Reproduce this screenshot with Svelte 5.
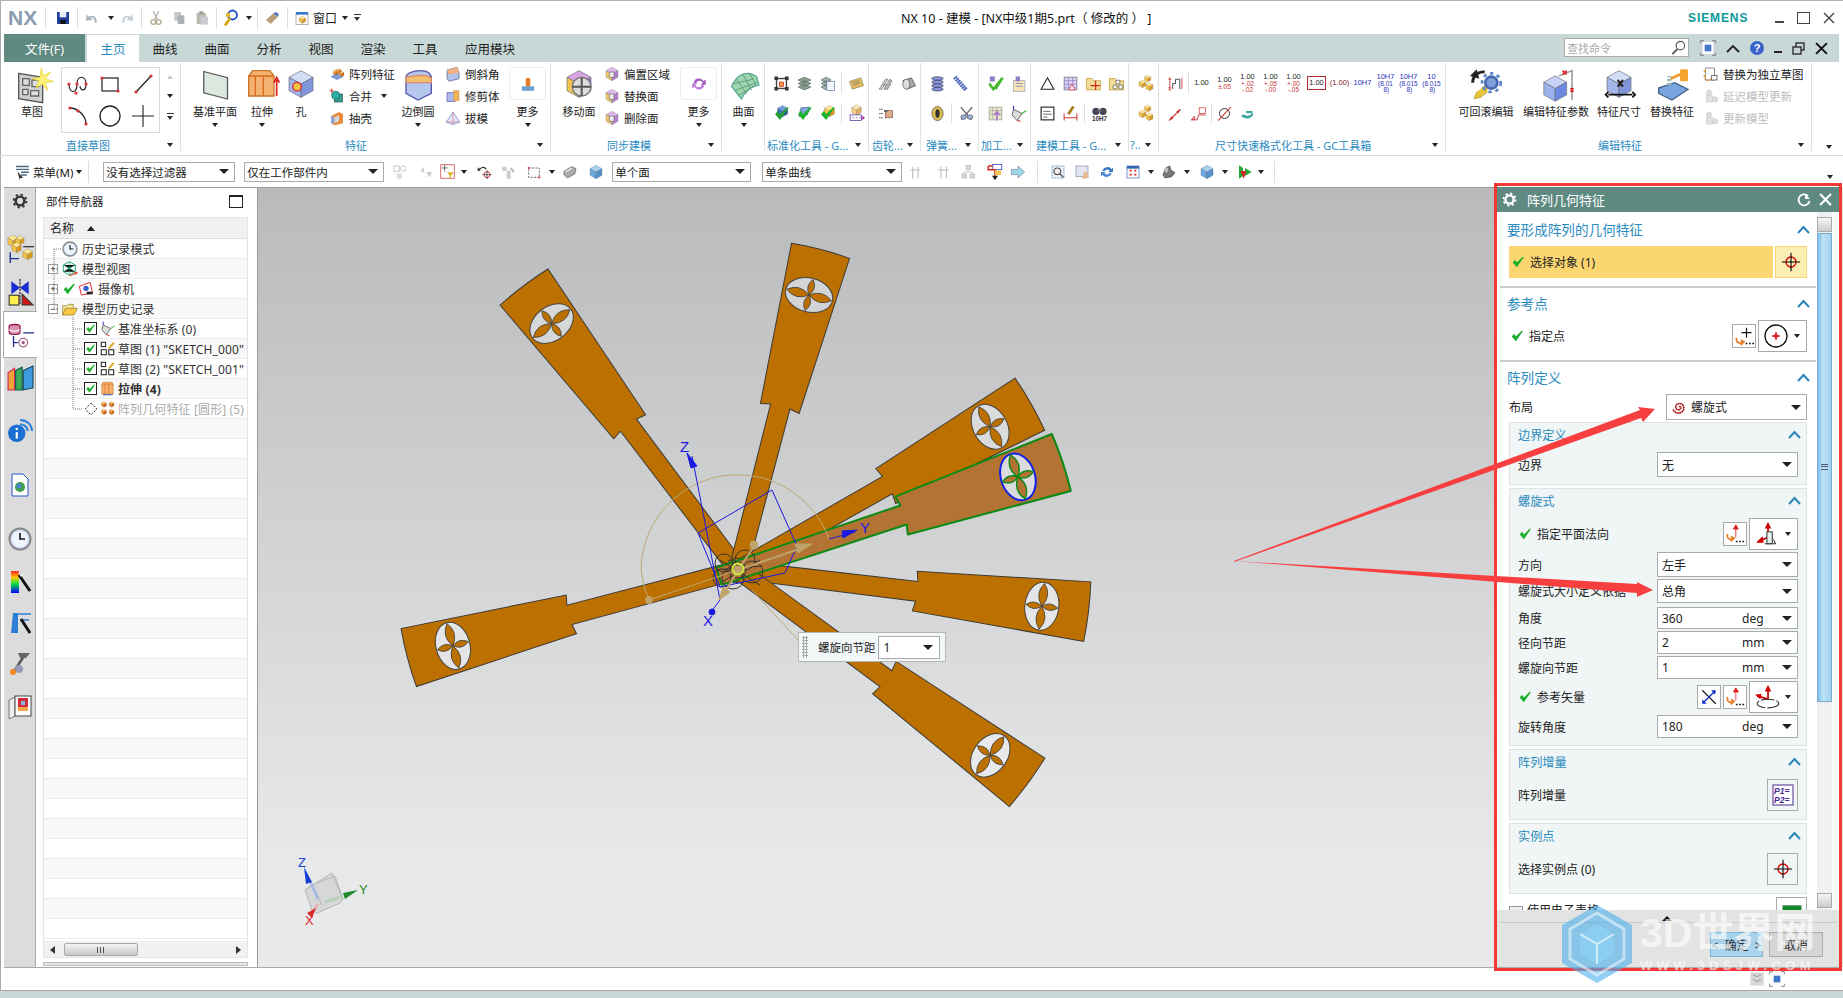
<script>
const cube=(a,b,c,x=0,y=0,s=1)=>`<g transform="translate(${x} ${y}) scale(${s})"><path d="M12 2 21 7 12 12 3 7Z" fill="${a}" stroke="#667" stroke-width=".5"/><path d="M3 7 12 12V22L3 17Z" fill="${b}" stroke="#667" stroke-width=".5"/><path d="M21 7 12 12V22L21 17Z" fill="${c}" stroke="#667" stroke-width=".5"/></g>`;
const bc=cube('#d3def7','#a3b6ea','#7f96da'),yc=(x,y,s)=>cube('#ffe58a','#f4c343','#d99a1e',x,y,s),oc=(x,y,s)=>cube('#ffb55e','#f08a20','#c9620f',x,y,s);
const dot=(x,y,r=1.6)=>`<circle cx="${x}" cy="${y}" r="${r}" fill="#d8333a"/>`;
const chk=`<path d="M3 13 7 8 10 13 20 3 22 4 10 21Z" fill="#18b02c"/>`;
const gear=(c='#444')=>`<circle cx="12" cy="12" r="6.5" fill="none" stroke="${c}" stroke-width="3.6"/><circle cx="12" cy="12" r="9.6" fill="none" stroke="${c}" stroke-width="3" stroke-dasharray="3.5 4"/>`;
const tgt=`<circle cx="12" cy="12" r="6" fill="none" stroke="#d00" stroke-width="1.6"/><path d="M12 1V23M1 12H23" stroke="#000" stroke-width="1.3"/>`;
const clock=`<circle cx="12" cy="12" r="10.5" fill="#cfdef2" stroke="#888" stroke-width="2"/><circle cx="12" cy="12" r="8" fill="#eef4fb"/><path d="M12 6V12H17" stroke="#111" stroke-width="1.6" fill="none"/>`;
const I={
 save:`<rect x="3" y="3" width="18" height="18" fill="#1d3f96"/><rect x="7" y="3" width="10" height="8" fill="#e4ecf8"/><rect x="8" y="15" width="8" height="6" fill="#111"/>`,
 undo:`<path d="M19 19C20 10 13 6 7 10L4 6 3 16 13 15 10 12C13 10 16 12 16 19Z" fill="#aab4bd"/>`,
 redo:`<path d="M5 19C4 10 11 6 17 10L20 6 21 16 11 15 14 12C11 10 8 12 8 19Z" fill="#c5ced4"/>`,
 cut:`<path d="M16 2 10 14M8 2 14 14" stroke="#b3b6b0" stroke-width="2"/><circle cx="8" cy="18" r="3.5" fill="none" stroke="#b3a98e" stroke-width="2"/><circle cx="16" cy="18" r="3.5" fill="none" stroke="#b3a98e" stroke-width="2"/>`,
 copy:`<rect x="5" y="3" width="10" height="13" fill="#c4c7cc"/><rect x="10" y="8" width="10" height="13" fill="#aeb2b8"/>`,
 paste:`<rect x="4" y="4" width="14" height="17" rx="1" fill="#bdb9ab"/><rect x="8" y="2" width="6" height="4" fill="#999"/><rect x="10" y="10" width="11" height="12" fill="#c9cdd2"/>`,
 key:`<circle cx="14" cy="8" r="6" fill="none" stroke="#2352c8" stroke-width="2.5"/><path d="M4 22 11 12" stroke="#d9a514" stroke-width="3.5"/><path d="M5 17 8 20" stroke="#d9a514" stroke-width="2"/><circle cx="8" cy="8" r="3" fill="#e3b52a"/>`,
 eraser:`<path d="M3 15 14 5 21 10 10 21Z" fill="#b9a07b"/><path d="M14 5 21 10 22 6 18 3Z" fill="#4a72c8"/>`,
 win:`<rect x="3" y="5" width="18" height="17" fill="#fff" stroke="#8a8a8a"/><rect x="3" y="3" width="18" height="4" fill="#3a78c9"/>${yc(6,8,.55)}`,
 menu:`<path d="M3 5H21M3 9H21M10 13H21M10 17H18" stroke="#4b6b80" stroke-width="2"/><path d="M5 12 13 21 9 21 8 24Z" fill="#333"/>`,
 sketch:`<path d="M2 4 20 7V26L2 23Z" fill="#ccd0d2" stroke="#555"/><path d="M5 8H10V13H5ZM12 9H17V14H12ZM5 16H9V20H5ZM11 17H17V21H11Z" fill="#ddd" stroke="#666"/><path d="M19 0 20.5 6 26 3 22 8 28 10 22 11 24 17 19.5 12 15 15 17 9.5 12 8 18 7Z" fill="#fff27a" stroke="#e5cc20" stroke-width=".5"/>`,
 spline:`<path d="M3 12C3 22 11 22 11 12 11 3 20 3 20 12 20 20 14 19 14 14" fill="none" stroke="#222" stroke-width="1.2"/>${dot(3,12)}${dot(10,21)}${dot(11,12)}${dot(20,12)}`,
 rect:`<rect x="4" y="6" width="16" height="13" fill="none" stroke="#222" stroke-width="1.2"/>${dot(4,6)}${dot(20,19)}`,
 line:`<path d="M5 20 20 4" stroke="#222" stroke-width="1.2"/>${dot(5,20)}${dot(20,4)}`,
 arc:`<path d="M4 4C12 4 20 12 20 20" fill="none" stroke="#222" stroke-width="1.3"/>${dot(4,4)}${dot(12,7)}${dot(20,20)}`,
 circle:`<circle cx="12" cy="12" r="10" fill="none" stroke="#222" stroke-width="1.3"/>`,
 plus:`<path d="M12 1V23M1 12H23" stroke="#222" stroke-width="1.1"/>`,
 plane:`<path d="M3 2 22 7V24L3 19Z" fill="#dbe7df" stroke="#555" stroke-width="1"/>`,
 extrude:`<path d="M2 6 5 2H18L21 6V21H2Z" fill="#f3b271" stroke="#c9762a"/><path d="M7 6V21M13 6V21M2 6H21" stroke="#d86a1c"/><path d="M23 21V9M21 11 23 7 25 11" stroke="#d22" stroke-width="1.3" fill="none"/>`,
 hole:`${bc}<circle cx="9" cy="14" r="3.2" fill="#f2c63a" stroke="#d24"/>`,
 pattern:`<path d="M2 16 12 10 22 16 12 21Z" fill="#7e9bd6"/>${oc(5,5,.4)}${oc(10,3,.4)}${oc(14,7,.4)}`,
 unite:`<rect x="8" y="9" width="12" height="12" fill="#3a9d92" stroke="#155"/><circle cx="10" cy="11" r="6" fill="#2bb3a3" stroke="#155"/><path d="M4 1V7M1 4H7" stroke="#d22" stroke-width="1.3"/>`,
 shell:`<path d="M3 9 15 3 21 6V20L9 23 3 20Z" fill="#e78b3a"/><path d="M8 11 15 8V17L8 20Z" fill="#d8d8d8"/><path d="M3 9 8 11V20L3 20Z" fill="#8aa4da"/>`,
 blend:`<path d="M3 7C3 4 8 2 14 2 20 2 22 5 22 8V19L12 24 3 19Z" fill="#b6c7ee" stroke="#55a"/><path d="M3 7C8 6 20 4 22 8L22 11 3 11Z" fill="#f0c070" stroke="#d86"/>`,
 chamfer:`<path d="M3 6 18 2 21 10V19L6 23 3 19Z" fill="#b0c2ee" stroke="#557"/><path d="M3 6 18 2 21 10 6 13Z" fill="#f3b081"/>`,
 trim:`<rect x="3" y="7" width="12" height="13" fill="#a9bbee" stroke="#55a"/><rect x="13" y="4" width="8" height="15" fill="#f0b45e" stroke="#c73" stroke-dasharray="2 1"/>`,
 draft:`<path d="M12 3 22 18 12 22 2 18Z" fill="#dfe5f6" stroke="#6480cc"/><path d="M12 3V22M2 18 22 18" stroke="#d55" stroke-width=".8"/>`,
 more:`<rect x="4" y="15" width="16" height="6" fill="#6f9cd2"/><rect x="9" y="4" width="6" height="11" rx="2" fill="#e8782a"/>`,
 move:`${cube('#d9a6e4','#f3c451','#a66dc5')}<circle cx="14" cy="14" r="7" fill="#ddd" stroke="#777"/><path d="M14 7V21M7 14H21" stroke="#555" stroke-width="1.5"/>`,
 offs:`${cube('#e2b8ec','#f6c865','#b680d0')}<path d="M8 9H15V17H8Z" fill="#eee" stroke="#666"/>`,
 refresh:`<path d="M5 11A7 7 0 0 1 18 8L21 6V13H14L17 10A5 5 0 0 0 8 11Z" fill="#a65cc7"/><path d="M19 13A7 7 0 0 1 6 16L3 18V11H10L7 14A5 5 0 0 0 16 13Z" fill="#c27ddc"/>`,
 surf:`<path d="M2 14C6 4 14 1 22 6L24 13C17 14 12 19 10 24Z" fill="#9fd6ad" stroke="#5a9"/><path d="M6 8 14 20M11 4 18 17M16 3 22 13M3 12 20 8M5 17 22 11M8 21 21 13" stroke="#5f9e83" stroke-width=".8"/>`,
 t1:`<rect x="5" y="5" width="14" height="14" fill="none" stroke="#444" stroke-width="2"/><rect x="9" y="10" width="6" height="6" fill="#f2a13a" stroke="#c22"/><path d="M2 2H7V7H2ZM17 2H22V7H17ZM2 17H7V22H2ZM17 17H22V22H17Z" fill="#333"/>`,
 t2:`<path d="M3 7 12 3 21 7 12 11ZM3 12 12 8 21 12 12 16ZM3 17 12 13 21 17 12 21Z" fill="#8aa08a" stroke="#566"/>`,
 t3:`<path d="M3 7 10 3 17 7 10 11ZM3 12 10 8 17 12 10 16ZM3 17 10 13 17 17 10 21Z" fill="#9fb5a7" stroke="#566"/><rect x="11" y="9" width="11" height="13" fill="#f3f7fa" stroke="#67a"/>`,
 t4:`<path d="M2 9 18 4 22 15 6 20Z" fill="#e8b95a" stroke="#886"/><path d="M6 11 16 8M7 14 17 11" stroke="#577" stroke-width="1"/>`,
 t5:`${cube('#6f9ce0','#3c6fc6','#2a55a5',4,-1,.8)}${chk.replace('#18b02c','#22a030')}`,
 t6:`<path d="M7 4 19 3 16 14 4 16Z" fill="#7da8d8" stroke="#468"/>${chk}`,
 t7:`${yc(5,-1,.8)}${chk}`,
 t8:`${cube('#ffe7b2','#f7cc7a','#e0aa5a',3,-2,.75)}<rect x="3" y="14" width="16" height="8" fill="#fff" stroke="#4a2b91"/><path d="M6 18H8M11 18H13M16 18H18" stroke="#4a2b91"/><path d="M20 15 24 18 20 21Z" fill="#b027a3"/>`,
 g1:`<path d="M3 20 12 6H15L7 20ZM8 14H20" stroke="#777" fill="#ddd" stroke-width="1.2"/><path d="M10 20 18 6 21 8 15 20Z" fill="#bbb" stroke="#666"/>`,
 g2:`<path d="M4 8 16 4 22 15 10 20Z" fill="#aaa" stroke="#444"/><ellipse cx="9" cy="13" rx="5" ry="7" fill="#ddd" stroke="#555"/>`,
 g3:`<path d="M3 6H9M3 12H9M3 18H9" stroke="#444" stroke-width="1.4" stroke-dasharray="2 1"/><rect x="12" y="8" width="10" height="10" fill="#d9b08a" stroke="#855"/><rect x="10" y="7" width="5" height="3" fill="#666"/>`,
 s1:`<ellipse cx="12" cy="5" rx="8" ry="2.5" fill="#8a96e0" stroke="#335"/><ellipse cx="12" cy="10" rx="8" ry="2.5" fill="#8a96e0" stroke="#335"/><ellipse cx="12" cy="15" rx="8" ry="2.5" fill="#8a96e0" stroke="#335"/><ellipse cx="12" cy="20" rx="8" ry="2.5" fill="#8a96e0" stroke="#335"/>`,
 s2:`<path d="M4 3 20 21" stroke="#3b59b8" stroke-width="6" stroke-dasharray="2.5 1"/><path d="M4 3 20 21" stroke="#9ab" stroke-width="1"/>`,
 s3:`<ellipse cx="12" cy="12" rx="8" ry="10" fill="#d9bb52" stroke="#555"/><ellipse cx="12" cy="12" rx="3" ry="6" fill="#333"/>`,
 s4:`<path d="M4 3 19 21M20 3 5 21" stroke="#667" stroke-width="2"/><ellipse cx="8" cy="17" rx="4" ry="3" fill="#9ab3e0" stroke="#555"/><ellipse cx="17" cy="17" rx="4" ry="3" fill="#9ab3e0" stroke="#555"/>`,
 m1:`<path d="M3 12 9 20 22 4 12 20" fill="none" stroke="#44b82c" stroke-width="3.5"/><rect x="4" y="2" width="7" height="7" fill="#8f7bc8"/>`,
 m2:`<rect x="5" y="8" width="16" height="15" fill="#f6e6b8" stroke="#99a"/><path d="M8 12H18M8 16H18" stroke="#77a"/><rect x="8" y="2" width="6" height="7" fill="#8f7bc8"/>`,
 m3:`<rect x="3" y="3" width="18" height="18" fill="#e8e4c6" stroke="#999"/><path d="M3 8H21M3 13H21M8 3V21M14 3V21" stroke="#aaa"/><path d="M14 8V22M10 14 14 10 18 14" stroke="#a86bd0" stroke-width="2" fill="none"/>`,
 csys:`<path d="M5 6 17 12 10 22 3 14Z" fill="#ddd" stroke="#333"/><path d="M5 6V1" stroke="#22c" stroke-width="1.5"/><path d="M17 12 23 8" stroke="#2a2" stroke-width="1.5"/><path d="M10 22 15 23" stroke="#d22" stroke-width="1.5"/>`,
 tri:`<path d="M12 4 21 20H3Z" fill="none" stroke="#222" stroke-width="1.5"/>`,
 tbl:`<rect x="3" y="3" width="18" height="18" fill="#dcd6f2" stroke="#667"/><path d="M3 8H21M3 13H21M3 18H21M9 3V21M15 3V21" stroke="#8a79c8"/><path d="M14 13 18 21H10Z" fill="#fff" stroke="#d22"/>`,
 fold:`<path d="M2 5H10L12 8H22V21H2Z" fill="#f1dc9a" stroke="#b9982f"/><path d="M15 8V21M8 15H21" stroke="#c22" stroke-width="1.6"/>`,
 fold2:`<path d="M2 5H10L12 8H22V21H2Z" fill="#f1dc9a" stroke="#b9982f"/><circle cx="14" cy="10" r="3" fill="#fff" stroke="#444"/><circle cx="10" cy="17" r="3" fill="#fff" stroke="#444"/><circle cx="18" cy="17" r="3" fill="#fff" stroke="#444"/>`,
 note:`<rect x="3" y="3" width="18" height="18" fill="#fff" stroke="#222" stroke-width="1.6"/><path d="M6 9H16M6 13H18M6 17H12" stroke="#333"/>`,
 dimb:`<path d="M3 12V22M21 12V22M3 18H21" stroke="#c22" stroke-width="1.3"/><path d="M9 13 16 2" stroke="#a87a20" stroke-width="4"/>`,
 bino:`<circle cx="7" cy="9" r="5" fill="#445"/><circle cx="17" cy="9" r="5" fill="#445"/><rect x="9" y="6" width="6" height="4" fill="#667"/><text x="12" y="23" font-size="9" text-anchor="middle" font-family="Liberation Sans" font-weight="700" fill="#333">10H7</text>`,
 yel:`${yc(9,-1,.5)}${yc(1,6,.55)}${yc(11,10,.55)}`,
 d1:`<path d="M2 6H6M4 3V21M2 21H6M2 18H6" stroke="#c33" stroke-width="1.2"/><path d="M8 20V12H12V6H18V20" fill="none" stroke="#333" stroke-width="1.2"/><path d="M21 4V20" stroke="#c33" stroke-width="1.2"/>`,
 d2:`<path d="M3 22 19 6" stroke="#c33" stroke-width="1.6"/><path d="M3 22 6 16 9 19ZM19 6 13 9 16 12Z" fill="#c33"/>`,
 d3:`<path d="M2 21H10L12 14H22M2 21 6 16 7 20Z" stroke="#c33" stroke-width="1.3" fill="none"/><rect x="13" y="4" width="9" height="8" fill="none" stroke="#c33"/>`,
 d4:`<circle cx="12" cy="12" r="7" fill="none" stroke="#333" stroke-width="1.4"/><path d="M3 22 21 3" stroke="#c33" stroke-width="1.5"/>`,
 d5:`<path d="M6 13C10 16 15 16 19 11V7L20 14C15 21 8 20 3 16Z" fill="#3fa9a0"/><path d="M10 10H19" stroke="#3fa9a0" stroke-width="3"/>`,
 rb:`<path d="M2 11A8 8 0 0 1 11 3" stroke="#222" fill="none" stroke-width="2.2"/><path d="M0 6 5 1 7 8Z" fill="#222"/><path d="M3 23 5 18 12 16 13 18 8 22Z" fill="#e8c53a" stroke="#a8891a" stroke-width=".5"/><path d="M6 20 15 12" stroke="#e8c53a" stroke-width="4"/><circle cx="16" cy="11" r="4.5" fill="#7da0d8" stroke="#4467b0" stroke-width="2"/><circle cx="16" cy="11" r="7" fill="none" stroke="#5b80c8" stroke-width="2" stroke-dasharray="2.5 2.8"/>`,
 param:`${cube('#c7d3f5','#9ab3ee','#6b8ae0',0,4,.95)}<path d="M14 6 24 2V12M24 12V24" stroke="#888" fill="none"/><path d="M17 2 20 5M20 2 17 5M23 15 25 18M25 15 23 18" stroke="#d22" stroke-width="1.2"/>`,
 fdim:`${bc}<path d="M4 20H22M4 18 2 20 4 22M22 18 24 20 22 22" stroke="#111" stroke-width="1.4" fill="none"/><path d="M11 9 15 14M15 9 11 14" stroke="#222" stroke-width="1.6"/>`,
 repl:`<path d="M2 15 14 11 24 16 12 24 2 19Z" fill="#7aa5e0" stroke="#468"/><path d="M10 13V6" stroke="#9bb" stroke-width="3" stroke-dasharray="2 1"/><path d="M11 8 20 4" stroke="#ef9a30" stroke-width="2"/><rect x="18" y="1" width="6" height="9" rx="1" fill="#f6a52c"/>`,
 indep:`<rect x="4" y="3" width="13" height="18" fill="#fff" stroke="#555"/><path d="M4 8H1M4 15H1" stroke="#d9a514" stroke-width="3"/><rect x="13" y="14" width="8" height="7" fill="#fff" stroke="#333"/><path d="M2 19C6 23 10 22 13 18" stroke="#e08026" stroke-width="1.5" fill="none"/>`,
 lag:`<circle cx="9" cy="7" r="4" fill="#ddd" stroke="#ccc"/><rect x="5" y="11" width="9" height="10" fill="#e2e2e2" stroke="#ccc"/><circle cx="18" cy="17" r="4" fill="#ddd" stroke="#ccc"/>`,
 s_a:`<rect x="3" y="3" width="8" height="8" fill="none" stroke="#c8c8c8" stroke-width="1.5"/><circle cx="17" cy="7" r="4" fill="none" stroke="#c8c8c8" stroke-width="1.5"/><rect x="7" y="14" width="8" height="8" fill="#ddd"/>`,
 s_b:`<path d="M4 10 10 14 8 4" fill="#ccc"/><path d="M13 12H21L18 19H16Z" fill="#ccc"/>`,
 s_c:`<rect x="2.5" y="2.5" width="19" height="19" fill="none" stroke="#c33"/><path d="M8 3V12M4 7H12" stroke="#333"/><path d="M11 13H21L17 18V22H15V18Z" fill="#e3b52a"/>`,
 s_d:`<path d="M3 10A6 6 0 0 1 14 8" stroke="#333" fill="none" stroke-width="1.6"/><path d="M1 5 6 9 1 11Z" fill="#333"/><circle cx="15" cy="16" r="4.5" fill="none" stroke="#c22" stroke-width="1.3"/><path d="M15 9V23M8 16H22" stroke="#222"/>`,
 s_e:`<path d="M3 4H10V10H3ZM10 10H16V22H10Z" fill="#ccc"/><path d="M16 6 21 12" stroke="#bbb" stroke-width="3"/>`,
 s_f:`<rect x="4" y="6" width="16" height="14" fill="none" stroke="#222" stroke-dasharray="3 2"/>${dot(4,6)}${dot(20,20)}`,
 s_g:`<path d="M3 11 14 4 21 7 19 15 8 21 3 16Z" fill="#aaa" stroke="#555"/><path d="M5 12 15 6" stroke="#ddd" stroke-width="3"/>`,
 s_h:`${cube('#a6d2ef','#6aaadf','#5590cc')}`,
 s_i:`<path d="M4 4V22M12 4V22M1 9H15" stroke="#bbb" stroke-width="1.5"/>`,
 s_j:`<path d="M9 4V22M17 4V22M5 9H21" stroke="#bbb" stroke-width="1.5"/>`,
 s_k:`<rect x="9" y="2" width="7" height="6" fill="#d5d5d5" stroke="#bbb"/><rect x="3" y="15" width="7" height="6" fill="#d5d5d5" stroke="#bbb"/><rect x="15" y="15" width="7" height="6" fill="#d5d5d5" stroke="#bbb"/><path d="M12 8V12H6V15M12 12H18V15" stroke="#bbb" fill="none"/>`,
 s_l:`<rect x="9" y="2" width="12" height="7" fill="#fff" stroke="#2a3dc0"/><path d="M3 4H9M3 4V9H12V20" stroke="#d22" fill="none" stroke-width="2"/><path d="M8 17 12 23 16 17Z" fill="#222"/><rect x="12" y="10" width="8" height="6" fill="#f3c651"/>`,
 s_m:`<path d="M2 8H12V3L22 12 12 21V16H2Z" fill="#9fd6e3" stroke="#78a"/>`,
 s_n:`<rect x="3" y="3" width="18" height="18" fill="#f2f2f2" stroke="#2a7bc0" stroke-dasharray="2 1"/><circle cx="11" cy="11" r="5" fill="none" stroke="#555" stroke-width="1.8"/><path d="M15 15 20 20" stroke="#555" stroke-width="2"/>`,
 s_o:`<rect x="3" y="3" width="18" height="16" fill="#e2e6f2" stroke="#88a"/><path d="M12 22 16 11 20 13 22 21Z" fill="#e8b98a"/>`,
 s_p:`<path d="M5 10A8 8 0 0 1 19 8L21 5V12H14L16 10A5 5 0 0 0 8 11Z" fill="#3a76c2"/><path d="M19 14A8 8 0 0 1 5 16L3 19V12H10L8 14A5 5 0 0 0 16 13Z" fill="#4d8ad0"/>`,
 s_q:`<rect x="3" y="3" width="18" height="18" fill="#fff" stroke="#3a67b5"/><rect x="3" y="3" width="18" height="4" fill="#3a67b5"/><path d="M7 10H10M14 10H17M7 16H10M14 16H17" stroke="#d22" stroke-width="2.5"/>`,
 s_r:`<path d="M3 16 7 6 13 3 15 9 21 13 16 19 6 21Z" fill="#777" stroke="#444"/><ellipse cx="8" cy="9" rx="3" ry="4" fill="#bbb"/>`,
 s_s:`<path d="M3 2V22L9 18 9 6ZM12 6 22 12 12 18Z" fill="#22aa3a"/><path d="M10 22 5 10 14 11Z" fill="#d22"/>`,
 clock,
 modelview:`<path d="M11 1 20 6V16L11 21 2 16V6Z" fill="none" stroke="#1ea87a" stroke-width="1.4"/><path d="M2 6 11 11 20 6M11 11V21M11 1V11M2 16 11 11 20 16" stroke="#1ea87a" stroke-width="1"/><path d="M11 22 22 18" stroke="#e0402a" stroke-width="1.6"/><path d="M24 17 19 16 20 21Z" fill="#e0402a"/>`,
 chkg:chk,
 camera:`<path d="M2 8 18 2 22 18 5 21Z" fill="#fff" stroke="#d22" stroke-width="1.4"/><circle cx="12" cy="11" r="4" fill="#3a5ad0"/><path d="M13 16H22V20H13Z" fill="#222"/>`,
 folder:`<path d="M1 21V7H8L10 5H17V10" fill="#f8e7a2" stroke="#8a7020"/><path d="M1 21 5 11H23L18 21Z" fill="#fcc845" stroke="#8a7020"/>`,
 sk:`<rect x="2" y="2" width="7" height="7" fill="#fff" stroke="#111" stroke-width="1.5"/><rect x="2" y="14" width="8" height="8" fill="#fff" stroke="#111" stroke-width="1.5"/><rect x="14" y="14" width="8" height="8" fill="#fff" stroke="#111" stroke-width="1.5"/><path d="M14 12 22 3" stroke="#d9a514" stroke-width="3"/>`,
 ext:`<path d="M3 5 5 2H19L21 5V21H3Z" fill="#f5b06d" stroke="#c9762a"/><path d="M8 5V21M14 5V21M3 5H21" stroke="#d86a1c"/><path d="M5 22H20" stroke="#3357c8" stroke-width="1.5"/>`,
 diam:`<path d="M12 2 22 12 12 22 2 12Z" fill="#fff" stroke="#111" stroke-width="1.5" stroke-dasharray="3.5 2.5"/>`,
 pg:`${oc(1,0,.45)}${oc(13,0,.45)}${oc(1,12,.45)}${oc(13,12,.45)}`,
 r_gear:gear('#333'),
 r_asm:`${yc(-1,-3,.55)}${yc(7,-2,.42)}${yc(3,4,.48)}${yc(13,10,.5)}<path d="M3 14V24M3 20H11" stroke="#1e2e8c" stroke-width="1.3"/><path d="M15 9H25" stroke="#111" stroke-width="1"/>`,
 r_con:`<path d="M4 2 12 8 20 2V14L12 8 4 14Z" fill="#1b2fd0"/><rect x="2" y="15" width="9" height="9" fill="#fff04e" stroke="#333"/><path d="M14 24V14L24 24Z" fill="#d01818" stroke="#333"/><path d="M12 0V24" stroke="#111" stroke-dasharray="2 1"/>`,
 r_part:`<ellipse cx="7" cy="4" rx="5" ry="2" fill="#c86a9c" stroke="#803"/><path d="M2 4V10C2 12 12 12 12 10V4" fill="#d994b8" stroke="#803"/><path d="M2 7C4 9 10 9 12 7" fill="none" stroke="#fff"/><path d="M6 13V23M6 19H10M15 10H25" stroke="#1e2e8c" stroke-width="1.2"/><circle cx="15" cy="19" r="4" fill="none" stroke="#a04a7a"/><circle cx="15" cy="19" r="1.5" fill="#a04a7a"/>`,
 r_book:`<path d="M1 7 7 3V23H1Z" fill="#f0a23a" stroke="#c25"/><path d="M8 5 14 2V23H8Z" fill="#3cab5a" stroke="#154"/><path d="M15 5 24 1V21L15 23Z" fill="#3f9be0" stroke="#145"/>`,
 r_info:`<path d="M12 3A10 10 0 0 1 23 13M12 7A6 6 0 0 1 19 13" stroke="#2c83d8" stroke-width="2" fill="none"/><circle cx="9" cy="15" r="8" fill="#1a6fd0"/><rect x="8" y="14" width="2" height="6" fill="#fff"/><rect x="8" y="10" width="2" height="2" fill="#fff"/>`,
 r_doc:`<path d="M4 1H15L20 6V23H4Z" fill="#fff" stroke="#2258c8"/><circle cx="12" cy="14" r="5" fill="#3fa04a"/><circle cx="11" cy="13" r="2.5" fill="#4a86d0"/>`,
 r_color:`<defs><linearGradient id="rb" x1="0" y1="0" x2="0" y2="1"><stop offset="0" stop-color="#f22"/><stop offset=".3" stop-color="#fc0"/><stop offset=".6" stop-color="#0d4"/><stop offset="1" stop-color="#00f"/></linearGradient></defs><rect x="3" y="1" width="8" height="22" fill="url(#rb)"/><path d="M11 5 22 21" stroke="#111" stroke-width="3"/><path d="M8 0 12 5 16 3 13 7" fill="#fff"/>`,
 r_vis:`<path d="M5 2H10V22H3Z" fill="#2d7fd6"/><path d="M10 3H23M12 9H21" stroke="#2d7fd6" stroke-width="1.4"/><path d="M13 8 22 22" stroke="#111" stroke-width="3"/>`,
 r_tool:`<path d="M5 21 16 4" stroke="#555" stroke-width="2.5"/><path d="M10 1H22L18 6H12Z" fill="#666"/><circle cx="11" cy="17" r="4" fill="#9a9ab8"/><circle cx="5" cy="20" r="3" fill="#f08a20"/>`,
 r_win:`<path d="M1 5 7 2V21L1 24Z" fill="#eee" stroke="#777"/><rect x="7" y="1" width="16" height="20" fill="#fff" stroke="#444"/><rect x="10" y="3" width="10" height="9" fill="#d62a3a"/><rect x="10" y="12" width="10" height="4" fill="#f3a748"/><path d="M13 6H17V10H13Z" fill="#7db8e8"/>`,
 plusdots:`<path d="M15 2V14M9 8H21" stroke="#111" stroke-width="1.4"/><path d="M3 14C2 20 6 22 11 19M8 17 12 19 8 23" stroke="#e8791f" stroke-width="2" fill="none"/><path d="M14 21H16M18 21H20M22 21H24" stroke="#111" stroke-width="2"/>`,
 point:`<circle cx="12" cy="12" r="11" fill="none" stroke="#111" stroke-width="1.3"/><path d="M12 7 13.3 10.7 17 12 13.3 13.3 12 17 10.7 13.3 7 12 10.7 10.7Z" fill="#d22"/>`,
 arrowdots:`<path d="M13 16V2M10 6 13 1 16 6Z" stroke="#d22" fill="#d22"/><path d="M3 12C2 18 6 20 10 17M7 15 11 17 7 21" stroke="#e8791f" stroke-width="2" fill="none"/><path d="M13 21H15M17 21H19M21 21H23" stroke="#111" stroke-width="2"/>`,
 vec:`<path d="M12 16V5" stroke="#c00" stroke-width="1.6"/><path d="M9 7 12 1 15 7Z" fill="#c00"/><path d="M12 15 3 19" stroke="#c00" stroke-width="1.6"/><path d="M7 14 1 20 8 20Z" fill="#c00"/><rect x="11" y="10" width="5" height="11" fill="#e8f0ea" stroke="#444"/><path d="M9 21H19L17 17" fill="none" stroke="#444"/>`,
 vec2:`<path d="M12 14V5" stroke="#c00" stroke-width="1.6"/><path d="M9 7 12 1 15 7Z" fill="#c00"/><path d="M12 14 2 11" stroke="#c00" stroke-width="1.6"/><path d="M6 9 0 10 5 14Z" fill="#c00"/><ellipse cx="12" cy="18" rx="10" ry="4" fill="none" stroke="#333" stroke-dasharray="12 2"/>`,
 flip:`<path d="M3 3 21 21" stroke="#111" stroke-width="1.5"/><path d="M20 4 4 20" stroke="#1030c8" stroke-width="2"/><path d="M15 3 21 3 20 9ZM3 15 9 21 3 21Z" fill="#1030c8"/>`,
 spiral:`<path d="M12 12C15 9 17 15 12 16 6 17 5 9 11 7 18 5 21 13 18 18 14 23 5 22 3 15" fill="none" stroke="#b01818" stroke-width="2.4" stroke-dasharray="3 .6"/>`,
 pp:`<rect x="2" y="2" width="20" height="20" fill="#fff" stroke="#4a2b91"/><text x="3" y="11" font-size="8.5" font-weight="700" font-family="Liberation Sans" fill="#4a2b91">P1=</text><text x="3" y="20" font-size="8.5" font-weight="700" font-family="Liberation Sans" fill="#4a2b91">P2=</text>`,
 tgt,
 table:`<rect x="2" y="4" width="20" height="16" fill="#fff" stroke="#999"/><rect x="2" y="4" width="20" height="5" fill="#0d8a2a"/><path d="M2 13H22M7 9V20M12 9V20M17 9V20" stroke="#555"/>`,
 rest:`<rect x="4" y="3" width="16" height="18" fill="#fff"/><rect x="7" y="7" width="10" height="10" fill="#3f78c8"/><path d="M1 5V1H6M18 1H23V5M23 19V23H18M6 23H1V19" stroke="#555" fill="none"/>`,
 flag:`<rect x="2" y="2" width="20" height="20" fill="#d8d8d8"/><path d="M6 5 12 9 18 5M6 12 12 16 18 12" stroke="#aaa" stroke-width="2" fill="none"/>`,
};
const T=(x,sub,c='#222',sc='#c33',box)=>({txt:x,sub,c,sc,box});
const g=[
 {w:177,label:'直接草图',ls:62,arrow:true,items:[{t:'big',w:56,ic:'sketch',s:32,label:'草图'},{t:'gal'}]},
 {w:370,label:'特征',ls:164,arrow:true,items:[
  {t:'big',w:68,ic:'plane',s:30,label:'基准平面',dd:1},{t:'big',w:26,ic:'extrude',s:32,label:'拉伸',dd:1},{t:'big',w:52,ic:'hole',s:32,label:'孔'},
  {t:'col',ml:2,w:69,rows:[{ic:'pattern',l:'阵列特征'},{ic:'unite',l:'合并',dd:1},{ic:'shell',l:'抽壳'}]},
  {t:'big',w:40,ic:'blend',s:32,label:'边倒圆',dd:1},
  {t:'col',ml:7,w:60,rows:[{ic:'chamfer',l:'倒斜角'},{ic:'trim',l:'修剪体'},{ic:'draft',l:'拔模'}]},
  {t:'big',w:37,ml:4,ic:'more',s:18,label:'更多',dd:1,boxed:1}]},
 {w:171,label:'同步建模',ls:56,arrow:true,items:[
  {t:'big',w:50,ml:3,ic:'move',s:32,label:'移动面'},
  {t:'col',w:76,rows:[{ic:'offs',l:'偏置区域'},{ic:'offs',l:'替换面'},{ic:'offs',l:'删除面'}]},
  {t:'big',w:37,ml:0,ic:'refresh',s:18,label:'更多',dd:1,boxed:1}]},
 {w:43,items:[{t:'big',w:43,ic:'surf',s:30,label:'曲面',dd:1}]},
 {w:104,label:'标准化工具 - G...',ls:2,arrow:true,items:[{t:'tools',rows:[['t1','t2','t3','|','t4'],['t5','t6','t7','|','t8']]}]},
 {w:52,label:'齿轮...',ls:3,arrow:true,items:[{t:'tools',rows:[['g1','g2'],['g3']]}]},
 {w:58,label:'弹簧...',ls:5,arrow:true,items:[{t:'tools',rows:[['s1','s2'],['s3','|','s4']]}]},
 {w:52,label:'加工...',ls:2,arrow:true,items:[{t:'tools',rows:[['m1','m2'],['m3','csys']]}]},
 {w:98,label:'建模工具 - G...',ls:5,arrow:true,items:[{t:'tools',rows:[['tri','tbl','fold','fold2'],['note','dimb','|','bino']]}]},
 {w:30,label:'?..',ls:1,arrow:true,items:[{t:'tools',rows:[['yel'],['yel']]}]},
 {w:287,label:'尺寸快速格式化工具 - GC工具箱',ls:56,arrow:true,items:[{t:'tools',rows:[
  ['d1','!',T('1.00'),T('1.00','±.05'),T('1.00','+.02\n-.02'),T('1.00','+.05\n-.00'),T('1.00','+.00\n-.05'),T('1.00',null,'#222','',1),T('(1.00)',null,'#802020'),T('10H7',null,'#2a35c0'),T('10H7','(8.01\n 8)','#2a35c0','#2a35c0'),T('10H7','(8.015\n 8)','#2a35c0','#2a35c0'),T('10','(8.015\n 8)','#2a35c0','#2a35c0')],
  ['d2','d3','!','d4','d5']]}]},
 {w:366,label:'编辑特征',ls:152,arrow:true,items:[
  {t:'big',w:80,ic:'rb',s:32,label:'可回滚编辑'},{t:'big',w:60,ic:'param',s:32,label:'编辑特征参数'},{t:'big',w:66,ic:'fdim',s:32,label:'特征尺寸'},{t:'big',w:40,ic:'repl',s:32,label:'替换特征'},
  {t:'col',ml:11,w:110,rows:[{ic:'indep',l:'替换为独立草图'},{ic:'lag',l:'延迟模型更新',gray:1},{ic:'lag',l:'更新模型',gray:1}]}]},
];
const seq=(start,arr)=>{let e=start;return arr.map(([c,ic,s=16])=>{const ml=c-s/2-e;e=c+s/2;return {ml,ic,s}})};
const qa=seq(45,[[45,'|',1],[63,'save'],[77,'|',1],[92,'undo'],[111,'v',6],[127,'redo'],[141,'|',1],[156,'cut'],[179,'copy'],[202,'paste'],[216,'|',1],[231,'key',18],[249,'v',6],[257,'|',1],[272,'eraser'],[287,'|',1],[302,'win']]);
const sb1=seq(385,[[401,'s_a'],[427,'s_b'],[448,'s_c',17],[465,'v',6],[486,'s_d'],[509,'s_e'],[535,'s_f'],[553,'v',6],[571,'s_g'],[597,'s_h']]);
const sb2=seq(903,[[919,'s_i'],[944,'s_j'],[969,'s_k'],[996,'s_l',18],[1019,'s_m'],[1038,'|',1],[1059,'s_n'],[1083,'s_o'],[1108,'s_p'],[1134,'s_q'],[1152,'v',6],[1170,'s_r'],[1188,'v',6],[1208,'s_h'],[1226,'v',6],[1246,'s_s'],[1262,'v',6],[1275,'|',1]]);
const tabs=['曲线','曲面','分析','视图','渲染','工具','应用模块'];
const rail=[['r_gear',16],['r_asm',26],['r_con',26],['r_part',26],['r_book',26],['r_info',26],['r_doc',24],['clock',24],['r_color',24],['r_vis',24],['r_tool',24],['r_win',24]];
const railGaps=[5,28,16,17,17,26,30,30,19,17,17,19];
const tree=[
 {t:'历史记录模式',ic:'clock'},{t:'模型视图',ic:'modelview',exp:'+'},{t:'摄像机',ic:'camera',exp:'+',ck:1},{t:'模型历史记录',ic:'folder',exp:'−'},
 {t:'基准坐标系 (0)',ic:'csys',sub:1},{t:'草图 (1) "SKETCH_000"',ic:'sk',sub:1},{t:'草图 (2) "SKETCH_001"',ic:'sk',sub:1},{t:'拉伸 (4)',ic:'ext',sub:1,bold:1},{t:'阵列几何特征 [圆形] (5)',ic:'pg',sub:1,dim:1}];
const blank=Array.from({length:26});
const blades=[
 {a:-127.1,L:356,h:'#d6d7d9'},{a:-75.5,L:331,h:'#d3d4d6'},{a:-29.6,L:337,h:'#dadbdd'},{a:6.8,L:353,h:'#e4e5e7'},{a:36.3,L:360,h:'#e8e9eb'},{a:165.1,L:342,h:'#e4e5e7'}];
const shape=(L,x0=-10)=>{const s=L*0.51,e=Math.sqrt(L*L-900);return `M${x0} -9L${s} -10L${s-2} -20L${e} -30A${L} ${L} 0 0 1 ${e} 30L${s-2} 20L${s} 10L${x0} 9Z`};
const petals=c=>`M${c} 0Q${c+9} -12 ${c} -23Q${c-9} -12 ${c} 0ZM${c} 0Q${c+9} 12 ${c} 23Q${c-9} 12 ${c} 0ZM${c} 0Q${c+8} -6.5 ${c+16} 0Q${c+8} 6.5 ${c} 0ZM${c} 0Q${c-8} -6.5 ${c-16} 0Q${c-8} 6.5 ${c} 0Z`;
const nums=[['角度','360','deg','a'],['径向节距','2','mm','b'],['螺旋向节距','1','mm','b']];
</script>

{#snippet ic(n,s=16)}<svg class="ic" width={s} height={s} viewBox="0 0 24 24">{@html I[n]}</svg>{/snippet}
{#snippet ch()}<svg class="chev" width="13" height="9" viewBox="0 0 13 9"><path d="M1 8 6.5 2 12 8" fill="none" stroke="#2a86b8" stroke-width="2"/></svg>{/snippet}
{#snippet dn(w='')}<span class="tri {w}"></span>{/snippet}
{#snippet seqIcons(list)}{#each list as q}{#if q.ic==='|'}<span class="vs" style:margin-left="{q.ml}px"></span>{:else if q.ic==='v'}<span class="vcell" style:margin-left="{q.ml}px">{@render dn()}</span>{:else}<span class="cell" style:margin-left="{q.ml}px" style:width="{q.s}px">{@render ic(q.ic,q.s)}</span>{/if}{/each}{/snippet}

<div class="app">
 <header class="title">
  <div class="qa"><span class="nx">NX</span>{@render seqIcons(qa)}<span class="qt">窗口</span>{@render dn('m1')}<span class="dbl"></span></div>
  <div class="apptitle">NX 10 - 建模 - [NX中级1期5.prt（ 修改的 ） ]</div>
  <div class="siemens">SIEMENS</div>
  <div class="wb"><span class="b-min"></span><span class="b-max"></span><svg width="12" height="12" viewBox="0 0 12 12"><path d="M1 1 11 11M11 1 1 11" stroke="#444" stroke-width="1.4"/></svg></div>
 </header>
 <nav class="tabs">
  <div class="file">文件(F)</div><div class="tab on">主页</div>
  {#each tabs as t,i}<div class="tab" class:wide={i===6}>{t}</div>{/each}
  <div class="search"><span>查找命令</span><svg width="15" height="15" viewBox="0 0 16 16"><circle cx="10" cy="6" r="4.5" fill="#fff" stroke="#555" stroke-width="1.2"/><path d="M7 9.5 1.5 15" stroke="#555" stroke-width="2"/></svg></div>
  <div class="tabicons">
   {@render ic('rest',16)}
   <svg width="14" height="9" viewBox="0 0 14 9"><path d="M1 8 7 2 13 8" fill="none" stroke="#222" stroke-width="1.8"/></svg>
   <span class="help">?</span>
   <span class="min2"></span>
   <svg width="13" height="13" viewBox="0 0 13 13"><rect x="4" y="1" width="8" height="7" fill="none" stroke="#222" stroke-width="1.3"/><rect x="1" y="5" width="8" height="7" fill="#c8d8d6" stroke="#222" stroke-width="1.3"/></svg>
   <svg width="13" height="13" viewBox="0 0 12 12"><path d="M1 1 11 11M11 1 1 11" stroke="#111" stroke-width="1.8"/></svg>
  </div>
 </nav>
 <section class="ribbon">
  {#each g as gr}
   <div class="grp" style:width="{gr.w}px">
    <div class="gbody">
     {#each gr.items as it}
      {#if it.t==='big'}
       <div class="big" style:width="{it.w}px" style:margin-left="{it.ml||0}px">
        <div class="bigic" class:boxed={it.boxed}>{@render ic(it.ic,it.s)}</div>
        <div class="lb">{it.label}</div>
        {#if it.dd}{@render dn('dd')}{/if}
       </div>
      {:else if it.t==='gal'}
       <div class="gal">{#each ['spline','rect','line','arc','circle','plus'] as n}<span>{@render ic(n,24)}</span>{/each}</div>
       <div class="galsc"><span class="up"></span>{@render dn()}<span class="dbl"></span></div>
      {:else if it.t==='col'}
       <div class="col" style:width="{it.w}px" style:margin-left="{it.ml||0}px">
        {#each it.rows as r}<div class="crow" class:gray={r.gray}>{@render ic(r.ic,16)}<span>{r.l}</span>{#if r.dd}{@render dn('m2')}{/if}</div>{/each}
       </div>
      {:else}
       <div class="tools">
        {#each it.rows as row}<div class="trow">{#each row as c}
         {#if c==='|'}<i class="tsep"></i>{:else if c==='!'}<i class="tsep s3"></i>{:else if typeof c==='string'}<span class="tc">{@render ic(c,17)}</span>{:else}<span class="tc txt"><b class:bx={c.box} style:color={c.c}>{c.txt}</b>{#if c.sub}<b class="sb" style:color={c.sc}>{c.sub}</b>{/if}</span>{/if}
        {/each}</div>{/each}
       </div>
      {/if}
     {/each}
    </div>
    <div class="glabel"><span style:margin-left="{gr.ls||0}px">{gr.label||''}</span>{#if gr.arrow}{@render dn('ga')}{/if}</div>
   </div>
  {/each}
  <div class="rbend">{@render dn()}</div>
 </section>
 <section class="selbar">
  {@render ic('menu',17)}<span class="mt">菜单(M)</span>{@render dn('m3')}<span class="vs sv1"></span>
  <div class="combo w1"><span>没有选择过滤器</span>{@render dn('k')}</div>
  <div class="combo w2"><span>仅在工作部件内</span>{@render dn('k')}</div>
  {@render seqIcons(sb1)}
  <div class="combo w3"><span>单个面</span>{@render dn('k')}</div>
  <div class="combo w4"><span>单条曲线</span>{@render dn('k')}</div>
  {@render seqIcons(sb2)}
  <div class="selend">{@render dn()}</div>
 </section>
 <main class="main">
  <aside class="rail">
   {#each rail as r,i}<div class="ri" class:act={i===3} style:margin-top="{railGaps[i]}px">{@render ic(r[0],r[1])}</div>{/each}
  </aside>
  <aside class="nav">
   <div class="navh"><span>部件导航器</span><i class="sq"></i></div>
   <div class="list">
    <div class="lh"><span>名称</span><i class="up2"></i></div>
    <div class="rows">
     <svg class="dots" width="90" height="175" viewBox="0 0 90 175"><path d="M10 10V70M10 10H18M10 30H14M10 50H14M10 70H14M29 78V170M29 90H39M29 110H39M29 130H39M29 150H39M29 170H38" stroke="#777" fill="none" stroke-dasharray="1 1"/></svg>
     {#each tree as r}
      <div class="row" class:bold={r.bold} class:dim={r.dim}>
       {#if r.sub}<span class="sl2"></span>{#if r.dim}<span class="dm">{@render ic('diam',14)}</span>{:else}<i class="cb">{@render ic('chkg',11)}</i>{/if}<span class="ri1">{@render ic(r.ic,15)}</span>
       {:else}<span class="sl1">{#if r.exp}<i class="ex">{r.exp}</i>{/if}</span>{#if r.ck}{@render ic('chkg',14)}<span class="sp2"></span>{/if}{@render ic(r.ic,16)}{/if}
       <span class="rt">{r.t}</span>
      </div>
     {/each}
     {#each blank as _}<div class="row"></div>{/each}
    </div>
    <div class="hs"><i class="al"></i><i class="th"><b></b></i><i class="ar"></i></div>
   </div>
   <div class="split"></div>
  </aside>
  <div class="vp">
   <svg class="cad" viewBox="258 188 1239 780" width="1239" height="780">
    <defs><linearGradient id="vpg" x1="0" y1="0" x2="0" y2="1"><stop offset="0" stop-color="#b9babc"/><stop offset=".85" stop-color="#e7e8ea"/><stop offset="1" stop-color="#e9eaec"/></linearGradient></defs>
    <rect x="258" y="188" width="1239" height="780" fill="url(#vpg)"/>
    <g transform="translate(738 570)">
     {#each blades as b}
      <g transform="rotate({b.a})">
       <path d={shape(b.L)} fill="#bb7000" stroke="#3d3a36" stroke-width="1"/>
       <ellipse cx={b.L-47} cy="0" rx="17" ry="24" fill={b.h} stroke="#444" stroke-width="1"/>
       <path d={petals(b.L-47)} fill="#bb7000" stroke="#444" stroke-width=".8"/>
      </g>
     {/each}
     <g transform="rotate(-18.4)">
      <path d={shape(342,-20)} fill="#b37433" stroke="#0c8a16" stroke-width="2" stroke-linejoin="round"/>
      <ellipse cx="295" cy="0" rx="17" ry="24" fill="#dadbdd" stroke="#1420e6" stroke-width="2"/>
      <path d={petals(295)} fill="#b37433" stroke="#0c8a16" stroke-width="1.4"/>
     </g>
    </g>
    <g fill="none" stroke="#3a3530" stroke-width="1">
     <circle cx="724" cy="563" r="9"/><circle cx="733" cy="578" r="11"/><circle cx="752" cy="572" r="11"/><circle cx="745" cy="560" r="10"/><circle cx="722" cy="578" r="9"/><circle cx="738" cy="570" r="8"/><path d="M720 560 760 585M722 582 760 560M716 570 762 566"/>
    </g>
    <path d="M772 490 698 533 720 587 785 573 797 546Z" fill="none" stroke="#1a1ae0" stroke-width="1"/>
    <path d="M829 539 A97 97 0 0 0 730 475 A97 97 0 0 0 641 566 A97 97 0 0 0 649 600 L738 570 M752 590 L799 641" fill="none" stroke="#bfa873" stroke-width="1"/>
    <g stroke="#1a1ae0" fill="#1a1ae0">
     <path d="M720 600 692 456" stroke-width="1"/><path d="M687 453 697 466 691 468Z"/>
     <path d="M829 539 855 532" stroke-width="1"/><path d="M857 530 843 538 842 531Z"/>
     <path d="M720 600 711 612" stroke-width="1"/><circle cx="712" cy="612" r="3"/>
    </g>
    <text x="680" y="452" class="ax">Z</text><text x="860" y="533" class="ax">Y</text><text x="703" y="626" class="ax">X</text>
    <g stroke="#bfa36a" fill="#bfa36a">
     <path d="M738 570 805 547" stroke-width="2"/><path d="M812 544 795 544 798 553Z"/><path d="M738 570 755 545" stroke-width="2"/><circle cx="754" cy="545" r="4"/><path d="M738 570 722 597" stroke-width="2"/><path d="M719 600 723 587 730 592Z"/><circle cx="649" cy="600" r="3.5"/><circle cx="738" cy="570" r="4"/>
    </g>
    <circle cx="738" cy="569" r="5.5" fill="none" stroke="#c8ec3c" stroke-width="2"/>
    <!-- triad -->
    <path d="M305 890 332 873 343 899 340 903 317 913 312 910Z" fill="#d2d2d3" fill-opacity=".8" stroke="#b4b4b5"/>
    <path d="M305 890 312 885 335 876M312 885 322 905M335 876 343 899" fill="none" stroke="#b4b4b5"/>
    <path d="M318 899 310 881" stroke="#a9b8e2" stroke-width="3"/>
    <path d="M304 867 312 882 306 884Z" fill="#1a3fd6"/>
    <path d="M318 904 314 910" stroke="#e3b3b6" stroke-width="3"/>
    <path d="M316 908 312 918 307 913Z" fill="#d62a2a"/>
    <path d="M325 902 343 896" stroke="#b8cfb9" stroke-width="3"/>
    <path d="M343 893 358 890 345 899Z" fill="#1e8a2a"/>
    <text x="298" y="867" class="tz">Z</text><text x="359" y="894" class="ty">Y</text><text x="305" y="925" class="tx">X</text>
   </svg>
   <div class="pop"><i class="grip"></i><span>螺旋向节距</span><div class="pin"><span>1</span>{@render dn('k')}</div></div>
  </div>
  <aside class="dlg">
   <div class="dh"><svg class="ic" width="15" height="15" viewBox="0 0 24 24">{@html gear('#fff')}</svg><span>阵列几何特征</span><svg class="dr" width="14" height="14" viewBox="0 0 14 14"><path d="M11 3A5.5 5.5 0 1 0 12.5 8" fill="none" stroke="#fff" stroke-width="1.8"/><path d="M8 1V6H13Z" fill="#fff"/></svg><svg width="13" height="13" viewBox="0 0 12 12"><path d="M1 1 11 11M11 1 1 11" stroke="#fff" stroke-width="2"/></svg></div>
   <div class="db">
    <div class="dscroll">
     <section class="s">
      <h3>要形成阵列的几何特征{@render ch()}</h3>
      <div class="yl"><div class="ybar">{@render ic('chkg',14)}<span>选择对象 (1)</span></div><div class="ybtn">{@render ic('tgt',20)}</div></div>
     </section>
     <section class="s">
      <h3>参考点{@render ch()}</h3>
      <div class="rw pt"><div class="lab">{@render ic('chkg',14)}<span>指定点</span></div><i class="b24">{@render ic('plusdots',20)}</i><i class="bb">{@render ic('point',24)}{@render dn('sm')}</i></div>
     </section>
     <section class="s last">
      <h3>阵列定义{@render ch()}</h3>
      <div class="rw lay"><span class="txt">布局</span><div class="sel big2">{@render ic('spiral',16)}<span>螺旋式</span>{@render dn('k')}</div></div>
      <div class="ss s0">
       <h4>边界定义{@render ch()}</h4>
       <div class="rx r1"><span>边界</span><div class="sel">无{@render dn('k')}</div></div>
      </div>
      <div class="ss">
       <h4>螺旋式{@render ch()}</h4>
       <div class="rx rbtn"><div class="lab">{@render ic('chkg',14)}<span>指定平面法向</span></div><i class="b24">{@render ic('arrowdots',20)}</i><i class="bb">{@render ic('vec',26)}{@render dn('sm')}</i></div>
       <div class="rx r2"><span>方向</span><div class="sel">左手{@render dn('k')}</div></div>
       <div class="rx r3"><span>螺旋式大小定义依据</span><div class="sel">总角{@render dn('k')}</div></div>
       {#each nums as n}<div class="rx r4 {n[3]}"><span>{n[0]}</span><div class="num"><b>{n[1]}</b><em>{n[2]}</em>{@render dn('k')}</div></div>{/each}
       <div class="rx rbtn r5"><div class="lab">{@render ic('chkg',14)}<span>参考矢量</span></div><i class="b24">{@render ic('flip',18)}</i><i class="b24">{@render ic('arrowdots',20)}</i><i class="bb">{@render ic('vec2',26)}{@render dn('sm')}</i></div>
       <div class="rx r4 b"><span>旋转角度</span><div class="num"><b>180</b><em>deg</em>{@render dn('k')}</div></div>
      </div>
      <div class="ss">
       <h4>阵列增量{@render ch()}</h4>
       <div class="rx rb1"><span>阵列增量</span><i class="b32">{@render ic('pp',24)}</i></div>
      </div>
      <div class="ss">
       <h4>实例点{@render ch()}</h4>
       <div class="rx rb1"><span>选择实例点 (0)</span><i class="b32">{@render ic('tgt',20)}</i></div>
      </div>
      <div class="rw xl"><i class="xc"></i><span class="txt">使用电子表格</span><i class="b32 r">{@render ic('table',22)}</i></div>
     </section>
    </div>
    <div class="vsb"><i class="sbtn u"></i><i class="thumb"><b></b></i><i class="sbtn d"></i></div>
   </div>
   <div class="df"><i class="upk"></i><div class="fl"></div><div class="btns"><button class="ok">&lt;&nbsp; 确定 &nbsp;&gt;</button><button class="cancel">取消</button></div></div>
  </aside>
 </main>
 <footer class="status"><span class="sti">{@render ic('flag',16)}{@render ic('rest',16)}</span></footer>
 <div class="strip"></div>

 <svg class="over" width="1843" height="998" viewBox="0 0 1843 998">
  <rect x="1495.5" y="184.5" width="345" height="785" fill="none" stroke="#f33838" stroke-width="3"/>
  <path d="M1234 561 1640 410 1638 407 1655 409 1643 422 1641 418 1234 562Z" fill="#f73f3f"/>
  <path d="M1234 561 1637 584 1637 582 1653 590 1637 597 1637 593Z" fill="#f73f3f"/>
  <g transform="translate(1561 905)">
   <path d="M36 0 71 20V58L36 78 1 58V20Z" fill="#4fb2ea" opacity=".62"/>
   <path d="M36 19 53 29V49L36 59 19 49V29Z" fill="#8dd0f3" opacity=".85"/>
   <path d="M36 8 63 24V54L36 70 9 54V24Z" fill="none" stroke="#fff" stroke-width="3" opacity=".5"/>
   <path d="M19 29 36 39 53 29M36 39V59" stroke="#fff" stroke-width="2" fill="none" opacity=".6"/>
  </g>
 </svg>
 <div class="wm"><b>3D世界网</b><span>WWW.3DSJW.COM</span></div>
</div>

<style>
:global(body){margin:0;background:#fff}
.app{width:1843px;height:998px;position:relative;overflow:hidden;display:flex;flex-direction:column;font-family:"Noto Sans","Noto Sans CJK SC",sans-serif;color:#222;font-size:11px;box-shadow:inset 1px 0 #aaa;background:#fff}
.ic{display:block;flex:none;overflow:visible}
.tri{display:inline-block;width:0;height:0;border:3.5px solid transparent;border-top:4px solid #222;border-bottom:0;flex:none}
.tri.k{border-width:5px 5px 0;border-top-color:#222;margin-left:auto}
.title{height:34px;display:flex;align-items:center;border-top:1px solid #b0b0b0;box-sizing:border-box;flex:none}
.qa{width:901px;display:flex;align-items:center;flex:none;position:relative}
.nx{font:700 21px "Liberation Sans",sans-serif;color:#8a9dae;width:37px;margin-left:8px;margin-right:0}
.vs{width:1px;height:22px;background:#ddd;flex:none}
.vcell{width:6px;display:flex;justify-content:center;flex:none}
.cell{display:flex;flex:none}
.qt{margin-left:3px;font-size:12px}
.m1{margin-left:5px}
.dbl{display:block;width:7px;height:6px;border-top:1px solid #333;position:relative;margin-left:6px}
.dbl::after{content:"";position:absolute;left:0;top:2px;border:3.5px solid transparent;border-top:4px solid #333;border-bottom:0}
.apptitle{font-size:12.5px;white-space:nowrap;width:787px;flex:none;color:#111}
.siemens{font:700 12px "Liberation Sans",sans-serif;color:#0a9a9a;letter-spacing:.9px;width:78px;flex:none;white-space:nowrap}
.wb{display:flex;align-items:center;gap:13px;margin-left:9px}
.b-min{width:9px;height:2px;background:#444;margin-top:8px}
.b-max{border:1.4px solid #444;box-sizing:border-box;width:13px;height:12px}
.tabs{height:28px;margin:0 4px;background:#c8d8d6;display:flex;align-items:stretch;flex:none}
.file{width:81px;background:#5f8a82;color:#fff;font-size:12.5px;display:flex;align-items:center;justify-content:center;margin-right:2px}
.tab{width:52px;display:flex;align-items:center;justify-content:center;font-size:12.5px;flex:none}
.tab.wide{width:78px}
.tab.on{background:#fff;color:#2a8bc0;margin-top:1px;margin-right:0}
.search{width:125px;height:19px;margin:4px 0 0 auto;background:#fff;border:1px solid #aaa;box-sizing:border-box;display:flex;align-items:center;justify-content:space-between;color:#aaa;font-size:11px;padding:0 2px}
.tabicons{display:flex;align-items:center;gap:10px;width:150px;padding-left:11px;box-sizing:border-box}
.help{width:14px;height:14px;border-radius:50%;background:#3a63c8;color:#fff;font:700 11px/14px "Liberation Sans",sans-serif;text-align:center}
.min2{width:8px;height:2px;background:#222;margin-top:8px}
.ribbon{height:93px;display:flex;padding-left:4px;border-bottom:1px solid #d9d9d9;box-sizing:content-box;flex:none}
.grp{height:88px;margin-top:1px;box-shadow:inset -1px 0 #e0e0e0;display:flex;flex-direction:column;flex:none;box-sizing:border-box;overflow:visible}
.gbody{height:75px;display:flex;flex:none}
.glabel{height:13px;display:flex;align-items:center;color:#2a8bc0;font-size:11px;white-space:nowrap;position:relative}
.ga{position:absolute;right:8px;top:5px}
.rbend{flex:1;position:relative}
.rbend .tri{position:absolute;left:14px;top:83px}
.big{display:flex;flex-direction:column;align-items:center;flex:none;white-space:nowrap;font-size:11px}
.bigic{height:36px;display:flex;align-items:center;justify-content:center;margin-top:3px}
.bigic.boxed{width:37px;height:33px;border:1px solid #eee;border-radius:3px;box-sizing:border-box;margin-top:4px;margin-bottom:2px}
.lb{line-height:16px;margin-top:2px}
.dd{margin-top:3px}
.gal{width:99px;height:66px;margin:4px 0 0 1px;border:1px solid #d9d9d9;box-sizing:border-box;display:grid;grid-template-columns:repeat(3,1fr);grid-template-rows:1fr 1fr;justify-items:center;align-items:center;flex:none}
.galsc{width:20px;display:flex;flex-direction:column;align-items:center;gap:15px;margin-top:12px}
.galsc .up{width:0;height:0;border:3.5px solid transparent;border-bottom:4px solid #c8c8c8;border-top:0}
.galsc .dbl{margin:0}
.col{display:flex;flex-direction:column;flex:none}
.crow{height:22px;display:flex;align-items:center;gap:4px;white-space:nowrap;font-size:11.5px}
.crow.gray span{color:#bdbdbd}
.m2{margin-left:5px}
.tools{padding:5px 0 0 5px;display:flex;flex-direction:column}
.trow{height:30px;display:flex;align-items:center}
.tc{width:23px;display:flex;justify-content:center;align-items:center;flex-direction:column;flex:none}
.tsep{width:1px;height:20px;background:#ddd;margin:0 3px 0 2px;flex:none}
.tsep.s3{margin:0 1px}
.txt b{font:400 7.5px/8px "Liberation Sans",sans-serif;white-space:pre;display:block;text-align:center}
.txt b.sb{font-size:6.5px;line-height:6.5px}
.bx{outline:1px solid #b03030;padding:2px 1px}
.selbar{height:31px;display:flex;align-items:center;padding-left:14px;flex:none;position:relative;box-sizing:border-box}
.mt{margin-left:2px;font-size:11.5px}
.m3{margin-left:3px}
.sv1{margin-left:6px}
.combo{height:20px;border:1px solid #aaa;box-sizing:border-box;display:flex;align-items:center;padding:0 5px 0 2px;flex:none;font-size:11.5px}
.w1{width:132px;margin-left:14px}.w2{width:140px;margin-left:9px}
.w3{width:139px;margin-left:8px}.w4{width:140px;margin-left:11px}
.selend{position:absolute;right:10px;bottom:5px}
.main{height:781px;display:flex;margin:0 3px 0 4px;border-top:1px solid #999;border-bottom:1px solid #aaa;box-sizing:border-box;flex:none;position:relative}
.rail{width:32px;background:#dcdcdc;border-right:1px solid #aaa;box-sizing:border-box;flex:none;display:flex;flex-direction:column;align-items:center}
.ri{display:flex;flex:none;position:relative}
.ri.act::before{content:"";position:absolute;left:-4px;right:-4px;top:-11px;bottom:-10px;background:#fff;border:1px solid #aaa;border-right:0;z-index:0}
.ri.act :global(svg){position:relative;z-index:1}
.nav{width:222px;flex:none;border-right:1px solid #999;box-sizing:border-box;background:#fff;display:flex;flex-direction:column;padding-left:7px}
.navh{height:29px;display:flex;align-items:center;justify-content:space-between;padding:0 14px 3px 3px;font-size:11.5px;box-sizing:border-box}
.sq{width:12px;height:10px;border:1px solid #222;border-top-width:2px;display:block}
.list{width:205px;height:741px;border:1.5px solid #e4e4e4;box-sizing:border-box;display:flex;flex-direction:column}
.lh{height:20px;background:#f1f1f1;display:flex;align-items:center;padding-left:6px;font-size:12px;border-bottom:1px solid #ddd;flex:none}
.up2{width:0;height:0;border:4px solid transparent;border-bottom:5px solid #222;border-top:0;margin-left:13px}
.rows{flex:1;overflow:hidden;position:relative}
.dots{position:absolute;left:0;top:0;z-index:3}
.row{height:20px;box-sizing:border-box;border-bottom:1px solid #ececec;display:flex;align-items:center;white-space:nowrap;overflow:hidden;font-size:12px;position:relative;z-index:2;letter-spacing:.12px}
.row:nth-child(odd){background:#f9f9f9}
.sl1{width:18px;flex:none;display:flex;align-items:center;padding-left:4px;box-sizing:border-box}
.sl2{width:40px;flex:none}
.ex{width:8px;height:8px;border:1px solid #999;background:#fff;font:normal 9px/8px "Liberation Sans",sans-serif;text-align:center;display:block;color:#111}
.cb{width:11px;height:11px;border:1px solid #222;background:#fff;flex:none;display:flex;align-items:center;justify-content:center}
.dm{width:13px;flex:none;display:flex}
.ri1{margin-left:3px;flex:none}
.sp2{width:2px}
.rt{margin-left:3px;color:#333}
.row .sl1 ~ .rt{margin-left:4px}
.bold .rt{font-weight:700}
.dim .rt{color:#aaa}
.hs{height:15px;background:#f1f1f1;display:flex;align-items:center;flex:none;position:relative;border-top:1px solid #eee}
.al{width:0;height:0;border:4px solid transparent;border-right:5px solid #333;border-left:0;margin-left:6px}
.th{width:74px;height:13px;margin-left:9px;border:1px solid #aaa;background:linear-gradient(#f2f2f2,#c8c8c8);box-sizing:border-box;border-radius:2px;display:flex;justify-content:center;align-items:center}
.th b{width:8px;height:6px;background:repeating-linear-gradient(90deg,#555 0 1px,transparent 1px 3px)}
.ar{width:0;height:0;border:4px solid transparent;border-left:5px solid #333;border-right:0;margin-left:auto;margin-right:6px}
.split{width:205px;height:4px;margin-top:4px;border:1px solid #bbb;background:#e6e6e6;box-sizing:border-box}
.vp{width:1239px;flex:none;position:relative;overflow:hidden}
.cad{display:block}
.ax{font:15px "Liberation Sans",sans-serif;fill:#1a1ae0}
.tz{font:13px "Liberation Sans",sans-serif;fill:#1a3fd6}.ty{font:13px "Liberation Sans",sans-serif;fill:#1e8a2a}.tx{font:13px "Liberation Sans",sans-serif;fill:#d62a2a}
.pop{position:absolute;left:540px;top:444px;width:148px;height:30px;box-sizing:border-box;background:#f2f7f7;border:1px solid #b5b5b5;display:flex;align-items:center;padding-left:3px;font-size:11.5px}
.grip{width:6px;height:22px;background:radial-gradient(#aaa 1px,transparent 1.3px) 0 0/3px 3px;margin-right:10px}
.pin{width:62px;height:23px;background:#fff;border:1px solid #aaa;box-sizing:border-box;display:flex;align-items:center;padding:0 6px 0 5px;margin-left:2px;font-size:12px}
.dlg{width:346px;flex:none;background:#e3e3e3;position:relative;display:flex;flex-direction:column;padding:0 3px 0 0;box-sizing:border-box;margin-top:-1px}
.dh{height:25px;background:#5f8a82;color:#fff;font-size:13px;display:flex;align-items:center;padding-left:5px;flex:none;gap:10px}
.dr{margin-left:auto;margin-right:-2px}
.dh svg:last-child{margin-right:8px}
.db{height:698px;display:flex;background:#fff;flex:none;overflow:hidden;padding-left:3px}
.dscroll{width:316px;flex:none;overflow:hidden;padding-top:4px;box-sizing:border-box}
.s{border-bottom:2px solid #ccc;margin-bottom:2px;background:#fff}
.s.last{border:0}
h3{margin:0;height:26px;display:flex;align-items:center;justify-content:space-between;font:400 13.6px "Noto Sans CJK SC",sans-serif;color:#2a8bc0;padding:0 6px 0 7px;box-sizing:border-box}
h4{margin:0;height:23px;display:flex;align-items:center;justify-content:space-between;font:400 12.2px "Noto Sans CJK SC",sans-serif;color:#2a8bc0;padding:0 5px 0 8px;box-sizing:border-box}
.yl{display:flex;margin:4px 0 0 9px;padding-bottom:8px;gap:2px}
.ybar{width:264px;height:32px;background:#fcd670;display:flex;align-items:center;padding-left:1px;box-sizing:border-box;gap:5px;font-size:12px}
.ybar :global(svg){margin-left:1px}
.ybtn{width:32px;height:32px;background:#fbeeb4;border:1px solid #fcd670;box-sizing:border-box;display:flex;align-items:center;justify-content:center}
.rw{display:flex;align-items:center;margin-left:9px;width:298px;font-size:12px}
.pt{height:32px;margin-top:4px;padding-bottom:8px}
.lab{display:flex;align-items:center;gap:5px;margin-right:auto;font-size:12px}
.lab :global(svg){margin-left:1px}
.b24{width:24px;height:24px;border:1px solid #aaa;background:#fff;box-sizing:border-box;display:flex;align-items:center;justify-content:center;flex:none;margin-left:2px}
.bb{width:49px;height:32px;border:1px solid #aaa;background:#fff;box-sizing:border-box;display:flex;align-items:center;justify-content:space-between;padding:0 6px 0 5px;margin-left:2px;flex:none}
.sel{width:141px;height:25px;border:1px solid #aaa;box-sizing:border-box;background:#fff;display:flex;align-items:center;padding:0 5px 0 4px;flex:none;font-size:12px}
.sel.big2{width:141px;height:26px;gap:4px}
.lay{height:26px;margin-top:4px;justify-content:space-between}
.ss{margin:3px 0 0 9px;width:298px;background:#f0f5f5;border:1px solid #dde3e3;box-sizing:border-box;padding-bottom:7px}
.ss.s0{margin-top:2px}
.rx{display:flex;align-items:center;justify-content:space-between;padding:0 8px;font-size:12px;white-space:nowrap}
.r1{margin-top:6px}
.rbtn{margin-top:6px;height:32px}
.rbtn .lab :global(svg){margin-left:0}
.r2{margin-top:2px}.r3{margin-top:2px}.r3 .sel{height:24px}
.r4{margin-top:4px}.r4.b{margin-top:2px}
.r5{margin-top:2px}
.num{width:141px;height:23px;border:1px solid #aaa;box-sizing:border-box;background:#fff;display:flex;align-items:center;padding:0 5px 0 4px;font-size:12px}
.a .num{height:22px}
.num b{font-weight:400;width:80px}.num em{font-style:normal}
.rb1{margin-top:6px;height:32px;margin-bottom:1px}
.b32{width:31px;height:32px;border:1px solid #aaa;box-sizing:border-box;background:#fff;display:flex;align-items:center;justify-content:center;flex:none}
.rb1 .b32{background:#f0f5f5}
.xl{margin-top:3px;height:32px;align-items:flex-start}
.xc{width:12px;height:12px;background:#eee;border:1px solid #999;margin:9px 4px 0 0}
.xl .txt{margin-top:4px;margin-right:auto}
.vsb{width:15px;margin-left:1px;display:flex;flex-direction:column;padding-top:5px;box-sizing:border-box;background:#f0f0f0;height:698px;position:relative}
.sbtn{height:15px;border:1px solid #aaa;background:linear-gradient(#f5f5f5,#ccc);display:block;box-sizing:border-box;flex:none}
.thumb{height:469px;margin-top:1px;background:linear-gradient(90deg,#7ec0ea,#bfe2f7 40%,#a0d2f1);border:1px solid #7aa9c9;box-sizing:border-box;display:flex;align-items:center;justify-content:center;flex:none}
.thumb b{width:7px;height:7px;background:repeating-linear-gradient(#557 0 1px,transparent 1px 2.5px)}
.sbtn.d{margin-top:auto;margin-bottom:2px}
.df{flex:1;background:#e3e3e3;position:relative;display:flex;flex-direction:column}
.upk{width:0;height:0;border:5px solid transparent;border-bottom:5px solid #111;border-top:0;margin:6px 0 0 165px;flex:none}
.fl{height:1px;background:#c9c9c9;margin:1px 3px 0 3px;flex:none}
.btns{display:flex;gap:6px;margin:9px 0 0 213px}
button{font:12px "Noto Sans","Noto Sans CJK SC",sans-serif;height:25px;padding:0;color:#333;box-sizing:border-box}
.ok{width:53px;background:#a9d3ec;border:1px solid #7eb6d8}
.cancel{width:54px;background:#d5d5d5;border:1px solid #aaa}
.status{height:22px;flex:none;position:relative;display:flex;justify-content:flex-end;align-items:center;padding-right:58px}
.sti{display:flex;gap:4px}
.strip{height:8px;background:#c8d8d6;border-top:1px solid #aaa;box-sizing:border-box;flex:none}
.over{position:absolute;left:0;top:0;pointer-events:none}
.wm{position:absolute;left:1640px;top:908px;color:#fff;display:flex;flex-direction:column;opacity:.62}
.wm b{font:700 41px/50px "Liberation Sans","Noto Sans CJK SC",sans-serif;white-space:nowrap}
.wm span{font:700 13px/16px "Liberation Sans",sans-serif;letter-spacing:4.4px;white-space:nowrap}
</style>
